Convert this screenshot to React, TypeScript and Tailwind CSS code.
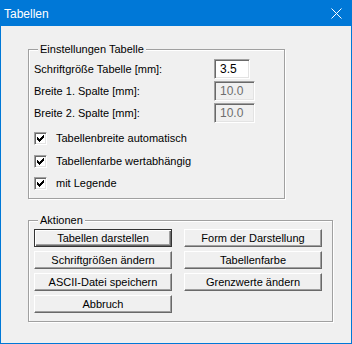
import React from 'react'

const font = { fontFamily: '"Liberation Sans", Arial, sans-serif' }

function Group({ title, className, children }: { title: string; className: string; children: React.ReactNode }) {
  return (
    <div
      className={`relative border border-[#a0a0a0] shadow-[1px_1px_0_#fff,inset_1px_1px_0_#fff] ${className}`}
    >
      <span className="absolute left-[9px] top-[-8px] h-[14px] bg-[#f0f0f0] px-[2px] text-[11px] leading-[14px] text-black">
        {title}
      </span>
      {children}
    </div>
  )
}

function Field({ value, disabled, width }: { value: string; disabled?: boolean; width: string }) {
  return (
    <div
      className={`flex h-[20px] items-center border border-t-[#a0a0a0] border-l-[#a0a0a0] border-r-white border-b-white pl-[5px] text-[12px] shadow-[inset_1px_1px_0_#696969,inset_-1px_-1px_0_#e3e3e3] ${width} ${
        disabled ? 'bg-[#f0f0f0] text-[#6d6d6d]' : 'bg-white text-black'
      }`}
    >
      {value}
    </div>
  )
}

function Check({ label }: { label: string }) {
  return (
    <div className="flex h-[13px] items-center">
      <div className="h-[13px] w-[13px] border border-t-[#a0a0a0] border-l-[#a0a0a0] border-r-white border-b-white bg-white shadow-[inset_1px_1px_0_#696969,inset_-1px_-1px_0_#e3e3e3]">
        <svg width="11" height="11" viewBox="0 0 11 11" shapeRendering="crispEdges">
          <rect x="8" y="2" width="1" height="3" fill="#000" />
          <rect x="7" y="3" width="1" height="3" fill="#000" />
          <rect x="6" y="4" width="1" height="3" fill="#000" />
          <rect x="5" y="5" width="1" height="3" fill="#000" />
          <rect x="4" y="6" width="1" height="3" fill="#000" />
          <rect x="3" y="5" width="1" height="3" fill="#000" />
          <rect x="2" y="4" width="1" height="3" fill="#000" />
        </svg>
      </div>
      <span className="ml-[9px] text-[11px] text-black">{label}</span>
    </div>
  )
}

function Btn({ label, primary }: { label: string; primary?: boolean }) {
  return (
    <button
      type="button"
      className={`flex h-[18px] w-[138px] items-center justify-center bg-[#f0f0f0] text-[11px] text-black ${
        primary
          ? 'border border-[#333] shadow-[inset_1px_1px_0_#fff,inset_-1px_-1px_0_#696969,inset_-2px_-2px_0_#a0a0a0]'
          : 'border border-t-white border-l-white border-r-[#696969] border-b-[#696969] shadow-[inset_-1px_-1px_0_#a0a0a0]'
      }`}
    >
      {label}
    </button>
  )
}

export default function App() {
  return (
    <div className="flex h-[344px] w-[352px] flex-col border border-[#0078d7] bg-[#f0f0f0]" style={font}>
      <div className="flex h-[25px] items-center justify-between bg-[#0078d7] pl-[3px] pr-[9px]">
        <span className="text-[12px] text-white">Tabellen</span>
        <svg width="11" height="11" viewBox="0 0 11 11">
          <path d="M0.5 0.5 L10.5 10.5 M10.5 0.5 L0.5 10.5" stroke="#fff" strokeWidth="1" />
        </svg>
      </div>

      <div className="flex flex-col pl-[27px] pt-[23px]">
        <Group title="Einstellungen Tabelle" className="w-[257px] pb-[8px] pl-[5px] pt-[9px]">
          <div className="grid grid-cols-[180px_auto] gap-y-[2px] text-[11px] text-black">
            <span className="flex h-[20px] items-center">Schriftgröße Tabelle [mm]:</span>
            <Field value="3.5" width="w-[36px]" />
            <span className="flex h-[20px] items-center">Breite 1. Spalte [mm]:</span>
            <Field value="10.0" width="w-[41px]" disabled />
            <span className="flex h-[20px] items-center">Breite 2. Spalte [mm]:</span>
            <Field value="10.0" width="w-[41px]" disabled />
          </div>
          <div className="mt-[9px] flex flex-col gap-[9.5px]">
            <Check label="Tabellenbreite automatisch" />
            <Check label="Tabellenfarbe wertabhängig" />
            <Check label="mit Legende" />
          </div>
        </Group>

        <Group title="Aktionen" className="mt-[21px] w-[305px] pb-[8px] pl-[5px] pt-[8px]">
          <div className="grid grid-cols-[138px_138px] gap-x-[12px] gap-y-[4px]">
            <Btn label="Tabellen darstellen" primary />
            <Btn label="Form der Darstellung" />
            <Btn label="Schriftgrößen ändern" />
            <Btn label="Tabellenfarbe" />
            <Btn label="ASCII-Datei speichern" />
            <Btn label="Grenzwerte ändern" />
            <Btn label="Abbruch" />
          </div>
        </Group>
      </div>
    </div>
  )
}
